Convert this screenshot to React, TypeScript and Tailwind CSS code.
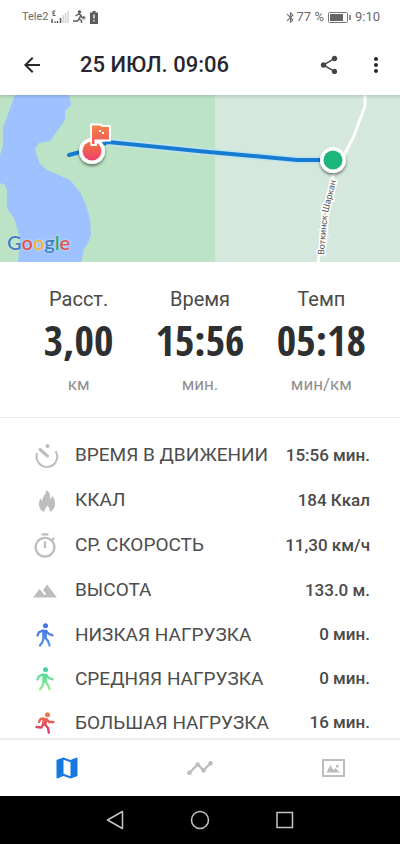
import React from "react";
import {
  MdArrowBack,
  MdShare,
  MdMoreVert,
  MdBluetooth,
  MdOutlineTimer,
  MdTerrain,
  MdTimeline,
  MdMap,
} from "react-icons/md";

function StatusBar() {
  return (
    <div className="flex h-[34px] shrink-0 items-center justify-between pr-5 pl-[22px] text-[#6a6a6a]">
      <div className="flex items-center">
        <span className="text-[11px]">Tele2</span>
        <svg className="h-4 w-5" viewBox="0 0 20 16" aria-hidden="true">
          <path d="M6.500 2H4v4.500h2.500M4 4.200h2" fill="none" stroke="#555" strokeWidth="1" />
          <path d="M3 10v4M6 12.500v1.500M8.500 12v2M11.500 9v5" stroke="#555" strokeWidth="1.500" />
          <path d="M14 6v8M16.500 4v10M19 2v12" stroke="#d2d2d2" strokeWidth="1.500" />
        </svg>
        <svg className="ml-1 h-3.5 w-[13px]" viewBox="0 0 13 14" fill="none" stroke="#5c5c5c" aria-hidden="true">
          <circle cx="6.500" cy="2" r="1.300" fill="#5c5c5c" />
          <path d="M2.500 6l3-2 2.500 1-2 4 2.500 1.500V13M6 9l-1.500 2H0M7.500 5.500L9.500 8l2-1.500" strokeWidth="1.400" />
          <circle cx="11" cy="8" r="1.200" strokeWidth=".8" />
        </svg>
        <svg className="ml-1 h-[13px] w-2" viewBox="0 0 8 13" aria-hidden="true">
          <path d="M2.500 0h3v1.500H8V13H0V1.500h2.500z" fill="#5c5c5c" />
          <path d="M4 3.500v4M4 9v1.500" stroke="#fff" strokeWidth="1.300" />
        </svg>
      </div>
      <div className="flex items-center text-[13px]">
        <MdBluetooth className="size-[13px]" />
        <span>77 %</span>
        <svg className="ml-1 h-[11px] w-[23px]" viewBox="0 0 23 11" aria-hidden="true">
          <rect x=".5" y=".5" width="19" height="10" rx="1" fill="none" stroke="#777" />
          <rect x="2" y="2" width="13" height="7" fill="#666" />
          <path d="M22 3v5" stroke="#666" strokeWidth="1.500" />
        </svg>
        <span className="ml-1">9:10</span>
      </div>
    </div>
  );
}

function TopBar() {
  return (
    <header className="flex h-[61px] shrink-0 items-center pr-3 pl-5 text-[#26272f]">
      <button type="button" aria-label="Назад">
        <MdArrowBack className="size-6" />
      </button>
      <h1 className="ml-9 flex-1 text-[22px] font-medium">25 ИЮЛ. 09:06</h1>
      <button type="button" aria-label="Поделиться" className="text-[#444]">
        <MdShare className="size-[22px]" />
      </button>
      <button type="button" aria-label="Ещё" className="ml-6">
        <MdMoreVert className="size-6" />
      </button>
    </header>
  );
}

function RouteMap() {
  return (
    <section className="relative h-[167px] overflow-hidden bg-[#d5e8dd]">
      <svg
        className="block h-full w-full"
        viewBox="0 0 400 167"
        preserveAspectRatio="xMidYMid slice"
        role="img"
        aria-label="Карта маршрута"
      >
        <defs>
          <linearGradient id="finish" x1="0" y1="0" x2="0" y2="1">
            <stop offset="0" stopColor="#f4743f" />
            <stop offset="1" stopColor="#ee3f6d" />
          </linearGradient>
          <linearGradient id="flag" x1="0" y1="0" x2="0" y2="1">
            <stop offset="0" stopColor="#f58245" />
            <stop offset="1" stopColor="#ef5560" />
          </linearGradient>
          <linearGradient id="topShade" x1="0" y1="0" x2="0" y2="1">
            <stop offset="0" stopColor="#000" stopOpacity=".13" />
            <stop offset="1" stopColor="#000" stopOpacity="0" />
          </linearGradient>
          <filter id="drop" x="-50%" y="-50%" width="200%" height="200%">
            <feDropShadow dx="0" dy="2" stdDeviation="1.500" floodOpacity=".5" />
          </filter>
        </defs>
        <rect width="400" height="168" fill="#d5e8dd" />
        <rect width="215" height="168" fill="#bce3c5" />
        <path
          d="M15 0H69L71 10L65 16V25L50 46L39 48L35 54L40 69L47 75L70 85L80 97L86 110L90 124L91 140L88 148L84 154L81 168H18L20 144L15 125L7 113V95L5 90L0 88V60L3 51V33L8 19Z"
          fill="#9dc2ff"
        />
        <path d="M365 0V11L354 41L343 62L333 80L324 123L318 168" fill="none" stroke="#fff" strokeWidth="3" />
        <path d="M110 47L198 56L297 65H333" fill="none" stroke="#bfe4ec" strokeWidth="7" />
        <path
          d="M69 60L92 54L108 47L198 56L297 65H333"
          fill="none"
          stroke="#167bd2"
          strokeWidth="4"
          strokeLinecap="round"
          strokeLinejoin="round"
        />
        <g fontSize="9" fill="#555" stroke="#fff" strokeWidth="3" paintOrder="stroke">
          <text transform="translate(324 160) rotate(-85)">Воткинск-</text>
          <text transform="translate(328 118) rotate(-76)">Шаркан</text>
        </g>
        <g filter="url(#drop)">
          <circle cx="333" cy="65" r="13" fill="#fff" />
          <circle cx="92" cy="56" r="13" fill="#fff" />
        </g>
        <circle cx="333" cy="65" r="9.500" fill="#1db57b" />
        <circle cx="92" cy="56" r="9.500" fill="url(#finish)" />
        <path d="M90 28.500H101L103 30H111V46.500H97V51H90.500Z" fill="#fff" />
        <path d="M92 30.500H100L102 32H109V44.500H94.500V49H92Z" fill="url(#flag)" />
        <path d="M99 35h2v2h-2zM102 37h2v2h-2z" fill="#fff" />
        <rect width="400" height="4" fill="url(#topShade)" />
      </svg>
      <div className="absolute bottom-2 left-[7px] font-['Lato',sans-serif] text-[20px] leading-6 font-semibold [text-shadow:0_0_2px_#ffffffcc]">
        <span className="text-[#3f80c4]">G</span>
        <span className="text-[#dc5547]">o</span>
        <span className="text-[#efb030]">o</span>
        <span className="text-[#3f80c4]">g</span>
        <span className="text-[#35a660]">l</span>
        <span className="text-[#dc5547]">e</span>
      </div>
    </section>
  );
}

const summary = [
  { label: "Расст.", value: "3,00", unit: "км" },
  { label: "Время", value: "15:56", unit: "мин." },
  { label: "Темп", value: "05:18", unit: "мин/км" },
];

function Summary() {
  return (
    <dl className="grid grid-cols-3 border-b border-[#e9e9e9] px-[18px] pt-6 pb-[21px] text-center">
      {summary.map((s) => (
        <div key={s.label}>
          <dt className="text-[20px] leading-[26px] text-[#4a4a4a]">{s.label}</dt>
          <dd className="pb-1 font-['Open_Sans_Condensed','Roboto_Condensed',sans-serif] text-[42px] leading-[56px] font-bold text-[#2d2f31]">
            {s.value}
          </dd>
          <dd className="text-[17px] leading-6 text-[#909090]">{s.unit}</dd>
        </div>
      ))}
    </dl>
  );
}

function MotionTimerIcon() {
  return (
    <svg className="ml-1 size-6" viewBox="0 0 24 24" fill="none" aria-hidden="true">
      <path d="M2.200 9A10.300 10.300 0 1 0 20.500 7" stroke="currentColor" strokeWidth="2" />
      <path d="M5 5.500L12.500 12" stroke="currentColor" strokeWidth="3" strokeLinecap="round" />
      <circle cx="12.500" cy="2" r="2" fill="currentColor" />
    </svg>
  );
}

function FlameIcon() {
  return (
    <svg className="ml-1 h-[22px] w-4" viewBox="0 0 16 22" aria-hidden="true">
      <path
        d="M7 0C11 2 11.500 5 11 9c1.500-.5 2-2 2-3.500C15.500 8 16 11 16 14c0 4-2.500 7-5.500 8 1-3-.5-5-2.500-6.500C7.500 18 5 19 5.500 22 2 21 0 18 0 14.500 0 12 .5 10 1.500 8c.5 1.500 1 2.500 2 3C3 6 7.500 5 7 0z"
        fill="currentColor"
      />
    </svg>
  );
}

function WalkIcon({ id, from, to }: { id: string; from: string; to: string }) {
  return (
    <svg className="h-6 w-[18px]" viewBox="0 0 18 24" fill="none" aria-hidden="true">
      <defs>
        <linearGradient id={id} gradientUnits="userSpaceOnUse" x1="0" y1="0" x2="0" y2="24">
          <stop offset="0" stopColor={from} />
          <stop offset="1" stopColor={to} />
        </linearGradient>
      </defs>
      <circle cx="9.500" cy="2.700" r="2.500" fill={`url(#${id})`} />
      <path d="M7 7.500h3.500L10 14.500H7z" fill={`url(#${id})`} stroke={`url(#${id})`} strokeWidth="1.500" strokeLinejoin="round" />
      <path
        d="M7 7.500L3 9.300L1.500 12.500M10.500 8.500l2.500 2.500 3.500 1.300M7.500 15L6.500 19L4 22.500M9.500 15L12 18l1.500 4.500"
        stroke={`url(#${id})`}
        strokeWidth="2.300"
        strokeLinecap="round"
        strokeLinejoin="round"
      />
    </svg>
  );
}

function RunIcon() {
  return (
    <svg className="h-[22px] w-5" viewBox="0 0 20 22" fill="none" aria-hidden="true">
      <defs>
        <linearGradient id="run" gradientUnits="userSpaceOnUse" x1="0" y1="0" x2="0" y2="22">
          <stop offset="0" stopColor="#f0804c" />
          <stop offset="1" stopColor="#dc2c6c" />
        </linearGradient>
      </defs>
      <circle cx="12.500" cy="2.700" r="2.500" fill="url(#run)" />
      <path d="M8.500 6.500l3.500.5-1.500 6-3-.5z" fill="url(#run)" stroke="url(#run)" strokeWidth="1.500" strokeLinejoin="round" />
      <path
        d="M8.500 6.500L5.500 7l-1.500 3M12 7.500l2 2.500h4.500M8 12.500L6.500 15.500L1.500 15M10.500 13l2.500 3 .8 4.500"
        stroke="url(#run)"
        strokeWidth="2.300"
        strokeLinecap="round"
        strokeLinejoin="round"
      />
    </svg>
  );
}

const totals = [
  { label: "ВРЕМЯ В ДВИЖЕНИИ", value: "15:56 мин.", icon: <MotionTimerIcon /> },
  { label: "ККАЛ", value: "184 Ккал", icon: <FlameIcon /> },
  { label: "СР. СКОРОСТЬ", value: "11,30 км/ч", icon: <MdOutlineTimer className="size-7" /> },
  { label: "ВЫСОТА", value: "133.0 м.", icon: <MdTerrain className="size-[26px]" /> },
];

const loads = [
  { label: "НИЗКАЯ НАГРУЗКА", value: "0 мин.", icon: <WalkIcon id="low" from="#3f6fdc" to="#5a96f0" /> },
  { label: "СРЕДНЯЯ НАГРУЗКА", value: "0 мин.", icon: <WalkIcon id="mid" from="#3fcf9c" to="#96f090" /> },
  { label: "БОЛЬШАЯ НАГРУЗКА", value: "16 мин.", icon: <RunIcon /> },
];

function DetailRow({ label, value, icon }: { label: string; value: string; icon: React.ReactNode }) {
  return (
    <div className="flex h-full items-center">
      <dt className="flex flex-1 items-center gap-4 text-[19px] whitespace-nowrap text-[#4d4d4d]">
        <span className="flex w-7 justify-center text-[#bdbdbd]">{icon}</span>
        {label}
      </dt>
      <dd className="text-[17px] font-medium whitespace-nowrap text-[#4a4a4a]">{value}</dd>
    </div>
  );
}

function Details() {
  return (
    <div className="pt-[15px] pr-[30px] pl-[31px]">
      <dl className="grid auto-rows-[45px]">
        {totals.map((d) => (
          <DetailRow key={d.label} {...d} />
        ))}
      </dl>
      <dl className="grid auto-rows-[44px]">
        {loads.map((d) => (
          <DetailRow key={d.label} {...d} />
        ))}
      </dl>
    </div>
  );
}

function TabBar() {
  return (
    <nav className="grid h-[58px] shrink-0 grid-cols-3 border-t-2 border-[#eee] text-[#bdbdbd]">
      <button type="button" aria-label="Карта" className="flex items-center justify-center text-[#1679e0]">
        <MdMap className="size-7" />
      </button>
      <button type="button" aria-label="График" className="flex items-center justify-center">
        <MdTimeline className="size-7" />
      </button>
      <button type="button" aria-label="Фото" className="flex items-center justify-center">
        <svg className="h-[18px] w-[23px]" viewBox="0 0 23 18" aria-hidden="true">
          <rect x="1" y="1" width="21" height="16" fill="none" stroke="currentColor" strokeWidth="2" />
          <path d="M4.500 13.500L8.500 6l3 5 2-2 4.500 4.500zM14 6h2.500v2.500H14z" fill="currentColor" />
        </svg>
      </button>
    </nav>
  );
}

function SystemNav() {
  return (
    <div className="flex h-12 shrink-0 items-center justify-center gap-[61px] bg-black text-[#c4c4c4]">
      <button type="button" aria-label="Назад (система)">
        <svg className="size-6" viewBox="0 0 24 24" fill="none" stroke="currentColor" strokeWidth="1.500">
          <path d="M19.500 3.500v17L4.500 12z" strokeLinejoin="round" />
        </svg>
      </button>
      <button type="button" aria-label="Домой">
        <svg className="size-6" viewBox="0 0 24 24" fill="none" stroke="currentColor" strokeWidth="1.500">
          <circle cx="12" cy="12" r="8.500" />
        </svg>
      </button>
      <button type="button" aria-label="Недавние">
        <svg className="size-6" viewBox="0 0 24 24" fill="none" stroke="currentColor" strokeWidth="1.500">
          <rect x="4" y="4.500" width="15.500" height="15" />
        </svg>
      </button>
    </div>
  );
}

export default function App() {
  return (
    <div className="flex h-screen flex-col overflow-hidden bg-white font-['Roboto',sans-serif]">
      <StatusBar />
      <TopBar />
      <main className="min-h-0 flex-1 overflow-hidden">
        <RouteMap />
        <Summary />
        <Details />
      </main>
      <TabBar />
      <SystemNav />
    </div>
  );
}
